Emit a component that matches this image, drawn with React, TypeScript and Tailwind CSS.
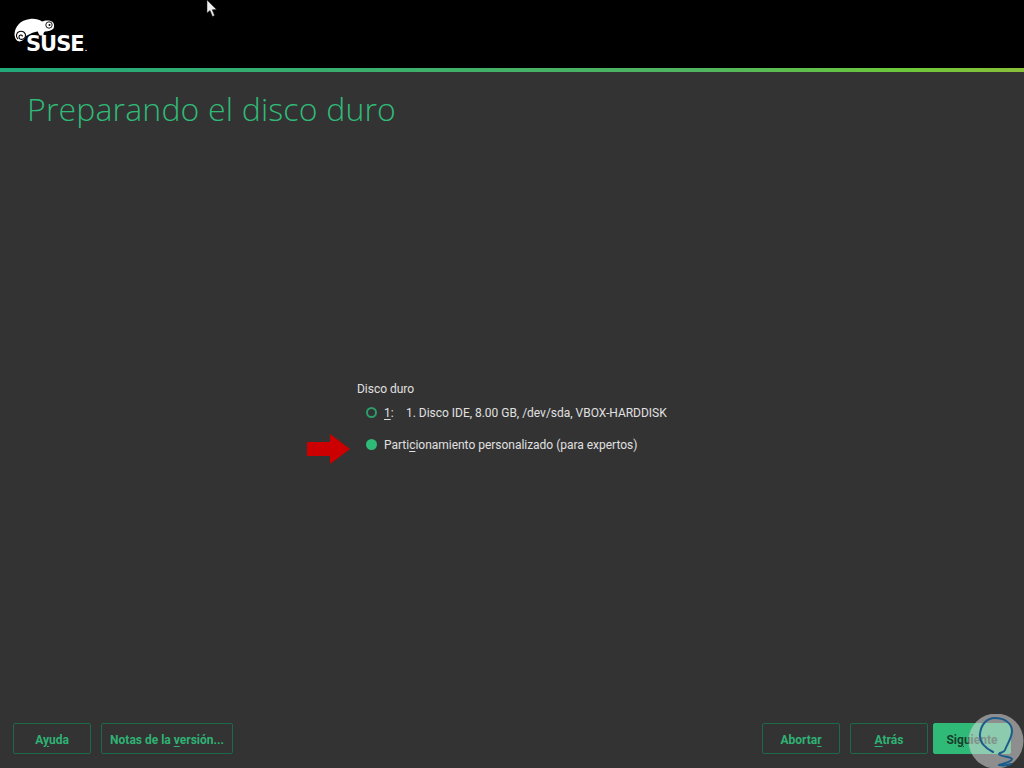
import React from "react";

function Logo() {
  return (
    <div className="relative w-[74px] h-[36px]">
      <svg width="42" height="26" viewBox="14 18 42 26" className="absolute left-0 top-0">
        <path
          d="M14.5 34 C15 27 20 20 30 19 C35 18.5 39 19.5 42 21.5 C45 20 50 20 52 21.5 C54.5 23 54.5 27 53.5 28.5 C52 30.5 48 31.5 45 31.5 C43.5 32.5 43 34 44 35.5 L40 35.5 C38.5 34 38 32.5 38 31.5 C35.5 31.5 33 32.5 31 33.5 L26 36 C24 41 19 43 16.5 40 C15 38.5 14.5 36 14.5 34 Z"
          fill="#fff"
        />
        <path d="M18 39 C15.5 37 16 32.5 19.5 31.5 C23 30.5 26 33 25.5 36 C25 39 22 40 20 39 C18.5 38 18.5 35.5 20.5 35 C21.5 34.8 22.5 35.5 22.3 36.5" fill="none" stroke="#000" strokeWidth="1.1" />
        <circle cx="49" cy="25" r="3.2" fill="none" stroke="#000" strokeWidth="0.9" />
        <circle cx="49.5" cy="25" r="1" fill="#000" />
      </svg>
      <span className="absolute left-[12px] top-[15px] text-white text-[21px] leading-[23px] font-bold tracking-[-1px] font-['DejaVu_Sans',sans-serif]">
        SUSE<span className="text-[6px] leading-none tracking-normal ml-[1px]">.</span>
      </span>
    </div>
  );
}

function FooterButton({ children, primary, className = "" }: { children: React.ReactNode; primary?: boolean; className?: string }) {
  return (
    <div
      className={
        "h-[31px] pt-[2px] flex items-center justify-center rounded-[2px] border text-[12px] font-bold " +
        (primary ? "bg-[#30ba78] border-[#30ba78] text-[#173f2c] " : "border-[#1c6a49] text-[#2fb274] ") +
        className
      }
    >
      {children}
    </div>
  );
}

export default function App() {
  return (
    <div className="relative w-[1024px] h-[768px] overflow-hidden bg-[#333333] flex flex-col font-['Roboto',sans-serif]">
      <header className="h-[68px] bg-black pl-[14px] pt-[18px] shrink-0">
        <Logo />
      </header>
      <div className="h-[4px] shrink-0 bg-[linear-gradient(to_right,#22a97a_0%,#50b560_68%,#6cc83a_88%,#8abf3a_100%)]" />

      <h1 className="pl-[27px] pt-[17px] h-[70px] shrink-0 text-[32px] leading-[40px] font-light tracking-[0.17px] text-[#30ba78] font-['Open_Sans',sans-serif]">
        Preparando el disco duro
      </h1>

      <main className="flex-1 pl-[357px] pt-[240px] text-[12px] leading-[14px] text-[#e0e0e0] tracking-[-0.02px]">
        <div>Disco duro</div>
        <div className="flex items-center pl-[9px] pt-[10px]">
          <span className="w-[11px] h-[11px] rounded-full border-2 border-[#2b9e6a] mr-[7px] -mt-[2px]" />
          <span className="w-[22px]">
            <span className="underline decoration-1 underline-offset-2">1</span>:
          </span>
          <span>1. Disco IDE, 8.00 GB, /dev/sda, VBOX-HARDDISK</span>
        </div>
        <div className="flex items-center pl-[9px] pt-[18px]">
          <span className="w-[11px] h-[11px] rounded-full bg-[#30ba78] mr-[7px] -mt-[2px]" />
          <span>
            Parti<span className="underline decoration-1 underline-offset-2">c</span>ionamiento personalizado (para expertos)
          </span>
        </div>
      </main>

      <footer className="h-[45px] shrink-0 flex pl-[13px] pr-[13px]">
        <div className="flex gap-[10px]">
          <FooterButton className="w-[78px]">
            <span>A<span className="underline underline-offset-2">y</span>uda</span>
          </FooterButton>
          <FooterButton className="w-[132px]">
            <span>Notas de la <span className="underline underline-offset-2">v</span>ersión...</span>
          </FooterButton>
        </div>
        <div className="ml-auto flex">
          <FooterButton className="w-[78px] mr-[10px]">
            <span>Aborta<span className="underline underline-offset-2">r</span></span>
          </FooterButton>
          <FooterButton className="w-[78px] mr-[5px]">
            <span><span className="underline underline-offset-2">A</span>trás</span>
          </FooterButton>
          <FooterButton primary className="w-[78px]">
            <span>Si<span className="underline underline-offset-2">g</span>uiente</span>
          </FooterButton>
        </div>
      </footer>

      {/* mouse cursor */}
      <svg width="12" height="18" viewBox="0 0 12 18" className="absolute left-[206px] top-0">
        <path d="M1 0 L1 13 L4 10.5 L6.5 16.5 L8.5 15.5 L6.2 9.8 L10.5 9.5 Z" fill="#eee" stroke="#222" strokeWidth="0.5" />
      </svg>

      {/* red annotation arrow */}
      <svg width="44" height="32" viewBox="0 0 44 32" className="absolute left-[307px] top-[433px]">
        <path d="M0 9 L23 9 L23 1 L43 16 L23 31 L23 23 L0 23 Z" fill="#cc0000" />
      </svg>

      {/* watermark */}
      <svg width="56" height="54" viewBox="0 0 56 54" className="absolute left-[968px] top-[714px]">
        <circle cx="28" cy="27" r="27.5" fill="#d8d8d8" fillOpacity="0.55" />
        <path
          d="M25 38 C17 34 11 28 12 20 C13 10 19 4 27 4 C36 4 44 9 44 17 C44 24 39 30 37 36 C36 39 32 38 31 40 C32 43 42 42 44 45 C44 48 36 49 31 51 C35 52 40 51 43 50"
          fill="none"
          stroke="#1c5c8c"
          strokeWidth="2"
          strokeLinecap="round"
          strokeLinejoin="round"
        />
      </svg>
    </div>
  );
}
